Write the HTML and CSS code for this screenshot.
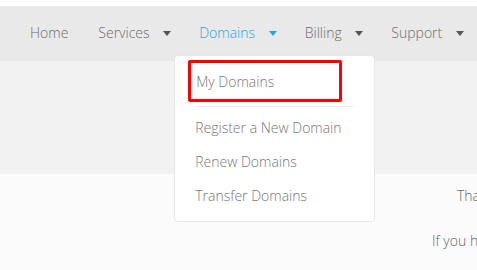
FILE: index.html
```html
<!DOCTYPE html>
<html lang="en">
<head>
    <meta charset="UTF-8">
    <title>Domains</title>
    <link rel="stylesheet" href="styles.css">
</head>
<body>
    <div id="topbar"></div>
    <div id="nav">
        <a class="nav-item" href="#">Home</a>
        <a class="nav-item" href="#">Services <span class="caret"></span></a>
        <div class="nav-wrap">
            <a class="nav-item active" href="#">Domains <span class="caret"></span></a>
            <div class="dropdown">
                <a class="drop-item selected" href="#">My Domains</a>
                <div class="divider"></div>
                <a class="drop-item" href="#">Register a New Domain</a>
                <a class="drop-item" href="#">Renew Domains</a>
                <a class="drop-item" href="#">Transfer Domains</a>
            </div>
        </div>
        <a class="nav-item" href="#">Billing <span class="caret"></span></a>
        <a class="nav-item" href="#">Support <span class="caret"></span></a>
    </div>
    <div id="banner"></div>
    <div id="content">
        <p class="line1">Thank you for your order.</p>
        <p class="line2">If you have any questions</p>
    </div>
</body>
</html>
```

FILE: styles.css
```css
body {
    margin: 0;
    font-family: "Open Sans", Arial, sans-serif;
    font-size: 14px;
    font-weight: 300;
    background-color: #fbfbfb;
    overflow: hidden;
}
#topbar {
    height: 6px;
    background-color: #ffffff;
}
#nav {
    height: 55px;
    background-color: #e9e9e9;
    display: flex;
    align-items: flex-start;
    padding-left: 15px;
    white-space: nowrap;
}
.nav-item {
    color: #6b6b6b;
    text-decoration: none;
    padding: 0 15px;
    line-height: 53px;
    display: block;
}
.nav-item.active {
    color: #1ea7e1;
}
.caret {
    display: inline-block;
    width: 0;
    height: 0;
    border-left: 4px solid transparent;
    border-right: 4px solid transparent;
    border-top: 5px solid #555555;
    margin: 0 -2px 0 10px;
    vertical-align: 2px;
}
.active .caret {
    border-top-color: #1ea7e1;
}
.nav-wrap {
    position: relative;
}
.dropdown {
    position: absolute;
    top: 49px;
    left: -10px;
    width: 201px;
    height: 167px;
    background-color: #ffffff;
    border: 1px solid #e6e6e6;
    border-radius: 4px;
    box-sizing: border-box;
    padding: 4px 20px 0 20px;
}
.drop-item {
    display: block;
    color: #777777;
    text-decoration: none;
    line-height: 34px;
}
.drop-item.selected {
    margin: 0 12px 0 -7px;
    padding: 2px 0 0 5px;
    height: 34px;
    border: 3px solid #ff0000;
    border-radius: 2px;
}
.divider {
    height: 1px;
    background-color: #eeeeee;
    margin: 4px 0 4px 0;
}
#banner {
    height: 113px;
    background-color: #f2f2f2;
}
#content {
    white-space: nowrap;
    color: #666666;
}
.line1 {
    margin: 12px 0 0 457px;
}
.line2 {
    margin: 26px 0 0 432px;
}
```
